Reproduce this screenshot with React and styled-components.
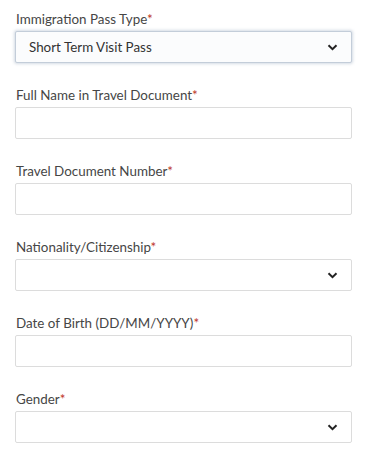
import React from "react";
import styled, { createGlobalStyle } from "styled-components";

const fields = [
  { label: "Immigration Pass Type", kind: "select", value: "Short Term Visit Pass", active: true },
  { label: "Full Name in Travel Document", kind: "input" },
  { label: "Travel Document Number", kind: "input" },
  { label: "Nationality/Citizenship", kind: "select" },
  { label: "Date of Birth (DD/MM/YYYY)", kind: "input" },
  { label: "Gender", kind: "select" },
];

function Chevron() {
  return (
    <svg width="11" height="7" viewBox="0 0 11 7">
      <path d="M1.5 1.3 L5.5 5.2 L9.5 1.3" fill="none" stroke="#222" strokeWidth="2" />
    </svg>
  );
}

function App() {
  return (
    <>
      <Global />
      <Form>
        {fields.map((f) => (
          <Field key={f.label}>
            <Label>
              {f.label}
              <Star>*</Star>
            </Label>
            <Box active={f.active}>
              <Value>{f.value}</Value>
              {f.kind === "select" && <Chevron />}
            </Box>
          </Field>
        ))}
      </Form>
    </>
  );
}

const Global = createGlobalStyle`
  body {
    margin: 0;
    background: #fff;
    font-family: Lato, "Liberation Sans", sans-serif;
  }
`;

const Form = styled.div`
  width: 337px;
  padding: 12px 0 0 15px;
  display: flex;
  flex-direction: column;
  gap: 25px;
`;

const Field = styled.div`
  display: flex;
  flex-direction: column;
  gap: 4px;
`;

const Label = styled.div`
  font-size: 13.4px;
  line-height: 15px;
  color: #464646;
  padding-left: 1px;
`;

const Star = styled.span`
  color: #c0392b;
`;

const Box = styled.div`
  box-sizing: border-box;
  height: 32px;
  display: flex;
  align-items: center;
  justify-content: space-between;
  padding: 0 13px 0 13px;
  background: ${(p) => (p.active ? "#fbfcfd" : "#fff")};
  border: 1px solid ${(p) => (p.active ? "#c3cdd9" : "#dcdcdc")};
  border-radius: 2px;
  box-shadow: ${(p) => (p.active ? "0 0 3px 1px rgba(160,175,195,0.45)" : "none")};
`;

const Value = styled.span`
  font-size: 13.4px;
  color: #333;
`;

export default App;
